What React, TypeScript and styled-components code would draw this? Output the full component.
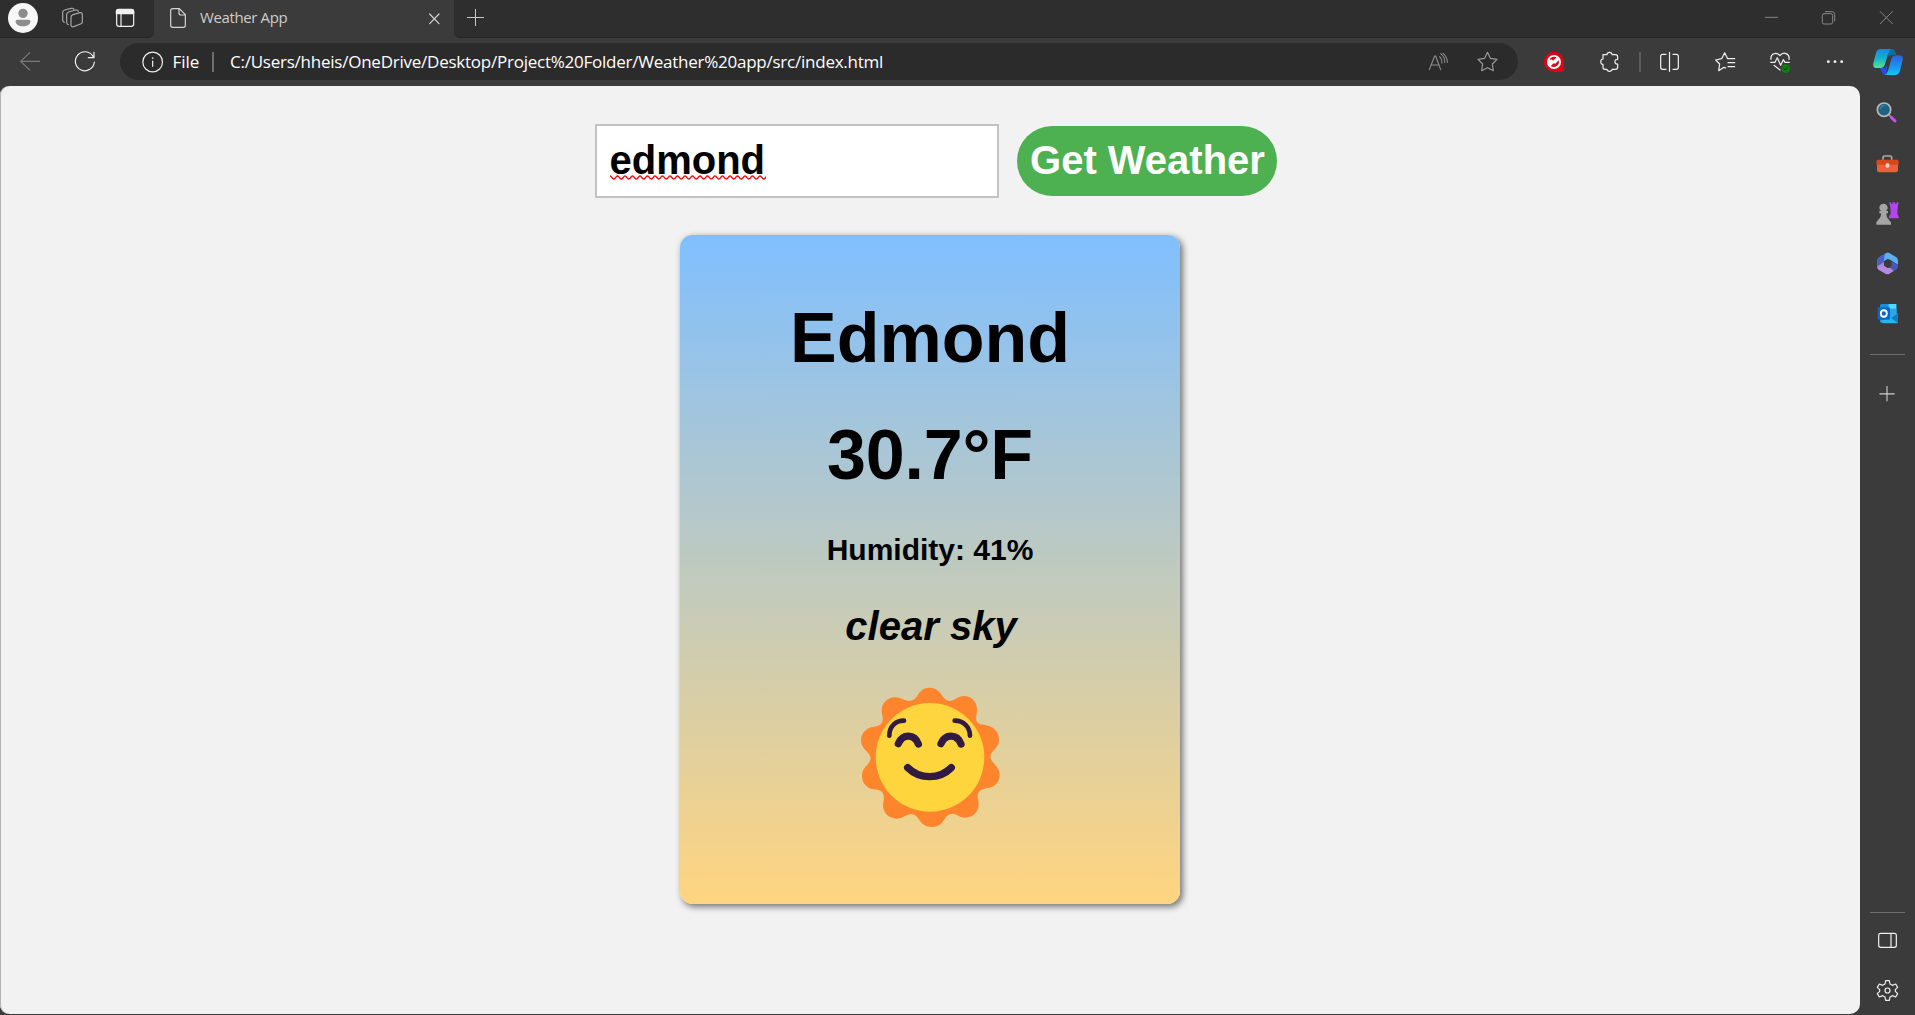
import React from "react";
import styled, { createGlobalStyle } from "styled-components";

const GlobalStyle = createGlobalStyle`
  * { box-sizing: border-box; }
  html, body { margin: 0; padding: 0; background: #3b3b3b; overflow: hidden; }
  h1, p { margin: 0; }
`;

const ui = `"Open Sans", "Noto Sans", sans-serif`;
const arial = `"Liberation Sans", Arial, sans-serif`;

const Window = styled.div`
  width: 1915px;
  height: 1015px;
  display: flex;
  flex-direction: column;
  background: #3b3b3b;
  font-family: ${ui};
`;

const TitleBar = styled.header`
  display: flex;
  height: 38px;
  flex: none;
`;

const TitleLeft = styled.div`
  width: 154px;
  display: flex;
  align-items: flex-start;
  background: #2e2e2e;
  border-bottom: 1px solid #262626;
  border-bottom-right-radius: 6px;
`;

const Tab = styled.div`
  width: 300px;
  display: flex;
  align-items: flex-start;
`;

const TabTitle = styled.span`
  margin: 7px 0 0 13px;
  width: 229px;
  font-size: 15px;
  line-height: 20px;
  letter-spacing: -0.38px;
  color: #cdcdcd;
  white-space: nowrap;
`;

const TitleRight = styled.div`
  flex: 1;
  display: flex;
  align-items: flex-start;
  padding-right: 21px;
  background: #2e2e2e;
  border-bottom: 1px solid #262626;
  border-bottom-left-radius: 6px;
`;

const Spacer = styled.div`
  flex: 1;
`;

const Toolbar = styled.div`
  display: flex;
  align-items: flex-start;
  height: 48px;
  flex: none;
`;

const AddressBar = styled.div`
  display: flex;
  align-items: center;
  width: 1398px;
  height: 37px;
  margin: 5px 0 0 24px;
  padding-right: 19px;
  border-radius: 19px;
  background: #2b2b2b;
`;

const AddressText = styled.span<{ $width: number; $ml: number; $track: number }>`
  width: ${(p) => p.$width}px;
  margin-left: ${(p) => p.$ml}px;
  font-size: 17px;
  line-height: 24px;
  letter-spacing: ${(p) => p.$track}px;
  color: #fff;
  white-space: nowrap;
`;

const VRule = styled.div<{ $ml: number; $mt?: number; $color: string }>`
  width: 2px;
  height: 20px;
  margin-left: ${(p) => p.$ml}px;
  margin-top: ${(p) => p.$mt ?? 0}px;
  background: ${(p) => p.$color};
`;

const Body = styled.div`
  display: flex;
  flex: 1;
  min-height: 0;
`;

const Page = styled.main`
  width: 1860px;
  height: 928px;
  display: flex;
  flex-direction: column;
  align-items: center;
  background: #f2f2f2;
  border-radius: 9px 10px 10px 9px;
  box-shadow: inset 1px 0 0 #b4b4b4;
  font-family: ${arial};
  font-weight: bold;
  color: #000;
`;

const Form = styled.form`
  display: flex;
  align-items: center;
  gap: 18px;
  margin: 38px 0 0 12px;
`;

const CityField = styled.div`
  width: 404px;
  height: 74px;
  padding: 11px 12.5px;
  background: #fff;
  border: 2px solid #c2c2c2;
  font-size: 40px;
  line-height: 46px;
`;

const Misspelled = styled.span`
  position: relative;
  display: inline-block;
`;

const Squiggle = styled.svg`
  position: absolute;
  left: 0;
  top: 38px;
`;

const Submit = styled.button`
  width: 260px;
  height: 70px;
  padding: 0 0 3px 1px;
  border: 0;
  border-radius: 35px;
  background: #4eb151;
  color: #fff;
  font: bold 40px/46px ${arial};
  white-space: nowrap;
`;

const Card = styled.section`
  width: 500px;
  height: 669px;
  margin-top: 37px;
  padding-top: 63px;
  display: flex;
  flex-direction: column;
  align-items: center;
  border-radius: 12.5px;
  background: linear-gradient(180deg, hsl(210, 100%, 75%), hsl(40, 100%, 75%));
  box-shadow: 2.5px 2.5px 6.25px hsla(0, 0%, 0%, 0.5);
`;

const City = styled.h1`
  font-size: 70px;
  line-height: 80px;
`;

const Temperature = styled.p`
  margin-top: 37px;
  font-size: 70px;
  line-height: 80px;
  letter-spacing: -0.2px;
`;

const Humidity = styled.p`
  margin-top: 38px;
  font-size: 30px;
  line-height: 34px;
`;

const Description = styled.p`
  margin-top: 36px;
  padding-left: 2px;
  font-size: 40px;
  line-height: 46px;
  font-style: italic;
`;

const SunIcon = styled.svg`
  margin-top: 21px;
  flex: none;
`;

const Sidebar = styled.aside`
  flex: 1;
  display: flex;
  flex-direction: column;
  align-items: center;
  padding-bottom: 13px;
`;

const HRule = styled.div<{ $mt: number }>`
  width: 35px;
  height: 1px;
  flex: none;
  margin-top: ${(p) => p.$mt}px;
  background: #6e6e6e;
`;

const IconSvg = styled.svg<{ $ml: number; $mt: number; $color: string }>`
  flex: none;
  margin-left: ${(p) => p.$ml}px;
  margin-top: ${(p) => p.$mt}px;
  color: ${(p) => p.$color};
  fill: none;
  stroke: currentColor;
  stroke-width: 3.6;
  stroke-linecap: round;
  stroke-linejoin: round;
`;

type IconProps = {
  box: [number, number, number, number];
  ml?: number;
  mt?: number;
  color?: string;
  children: React.ReactNode;
};

/* Icon artwork is drawn on a grid of three units per pixel. */
function Icon({ box, ml = 0, mt = 0, color = "#f0f0f0", children }: IconProps) {
  return (
    <IconSvg
      width={box[2] / 3}
      height={box[3] / 3}
      viewBox={box.join(" ")}
      $ml={ml}
      $mt={mt}
      $color={color}
    >
      {children}
    </IconSvg>
  );
}

function wave(width: number) {
  let d = "M0 1";
  for (let x = 0; x < width; x += 7.5) {
    d += ` C${x + 1.9} 1 ${x + 1.9} 4 ${x + 3.75} 4 S${x + 5.6} 1 ${x + 7.5} 1`;
  }
  return d;
}

function Sun() {
  return (
    <SunIcon width="180" height="170" viewBox="0 0 540 510" fill="none" strokeLinecap="round">
      <path
        fill="#ff852d"
        d="M208 93C225 91 229 81 237 70C245 58 256 53 268 53C281 53 293 58 301 69C310 81 314 92 332 93C346 90 354 78 372 78C395 78 411 96 411 118C411 132 406 143 410 154C417 167 432 163 447 168C466 174 477 190 477 209C477 236 453 240 451 260C454 281 479 288 479 315C479 336 464 352 443 354C429 356 414 360 413 378C413 388 416 394 416 403C416 426 399 443 376 443C358 443 352 432 338 431C320 433 317 443 308 455C300 466 288 471 275 471C261 471 249 466 241 454C233 443 228 433 212 432C197 434 188 446 170 446C147 446 129 429 129 406C129 396 133 388 131 377C128 360 114 360 100 358C80 354 66 339 66 318C66 290 90 286 92 264C90 245 63 239 63 211C63 191 78 174 98 171C113 169 127 167 128 148C129 139 125 132 125 122C125 99 143 82 166 82C184 82 192 93 208 93Z"
      />
      <circle cx="270" cy="262" r="163" fill="#ffd53e" />
      <g stroke="#321b41">
        <path strokeWidth="14" d="M148 197C148 170 165 152 192 152M344 152C371 152 389 170 390 197" />
        <path strokeWidth="22" d="M175 221C188 191 223 191 235 222M303 221C316 191 351 191 363 222" />
        <path strokeWidth="22" d="M203 293C239 329 299 329 334 293" />
      </g>
    </SunIcon>
  );
}

export default function App() {
  return (
    <Window>
      <GlobalStyle />
      <TitleBar>
        <TitleLeft>
          <Icon box={[24, 9, 90, 90]} ml={8} mt={3}>
            <circle cx="69" cy="54" r="45" fill="#f7f7f7" stroke="none" />
            <circle cx="69" cy="40" r="14" fill="#8c8c8c" stroke="none" />
            <path d="M52 59H86Q91 59 91 64C91 74 82 79 69 79S47 74 47 64Q47 59 52 59Z" fill="#8c8c8c" stroke="none" />
          </Icon>
          <Icon box={[183, 21, 69, 66]} ml={23} mt={7} color="#a6a6a6">
            <path d="M219 44L240 38Q247 37 247 44V65Q247 70 242 72L221 80Q213 82 213 75V52Q213 46 219 44Z" />
            <path d="M205 74Q200 73 200 67V43Q200 38 206 36L226 30Q233 29 235 34" />
            <path d="M193 67Q188 65 188 60V37Q188 32 194 30L213 25Q220 24 222 28" />
          </Icon>
          <Icon box={[345, 24, 60, 60]} ml={31} mt={8}>
            <rect x="350" y="29" width="51" height="50" rx="7" />
            <path d="M349 41V35Q349 28 356 28H394Q401 28 401 35V41Z" fill="currentColor" />
            <path d="M363 42V78" />
          </Icon>
        </TitleLeft>
        <Tab>
          <Icon box={[507, 21, 54, 66]} ml={15} mt={7} color="#d4d4d4">
            <path d="M518 26H538L556 44V76Q556 82 550 82H518Q512 82 512 76V32Q512 26 518 26ZM537 27V39Q537 45 543 45H555" />
          </Icon>
          <TabTitle>Weather App</TabTitle>
          <Icon box={[1284, 36, 39, 39]} ml={-1} mt={12} color="#d4d4d4">
            <path d="M1289 42L1317 71M1317 42L1289 71" />
          </Icon>
        </Tab>
        <TitleRight>
          <Icon box={[1398, 24, 57, 57]} ml={12} mt={8} color="#c8c8c8">
            <path d="M1402 52.5H1451M1426.5 28V77" strokeWidth="3" />
          </Icon>
          <Spacer />
          <Icon box={[1092, 45, 45, 15]} mt={15} color="#858585">
            <path d="M1096 52H1133" strokeWidth="3" />
          </Icon>
          <Icon box={[1263, 30, 45, 45]} ml={42} mt={10} color="#858585">
            <g strokeWidth="3">
              <rect x="1267" y="41" width="31" height="31" rx="5" />
              <path d="M1276 35H1296Q1304 35 1304 43V63" />
            </g>
          </Icon>
          <Icon box={[1437, 30, 45, 45]} ml={43} mt={10} color="#858585">
            <path d="M1441 35L1477 71M1477 35L1441 71" strokeWidth="3" />
          </Icon>
        </TitleRight>
      </TitleBar>

      <Toolbar>
        <Icon box={[57, 153, 66, 63]} ml={19} mt={13} color="#7a7a7a">
          <path d="M119 184H62M89 158L62 184L89 210" />
        </Icon>
        <Icon box={[222, 153, 66, 66]} ml={33} mt={13}>
          <path d="M283 186A28.500 28.500 0 1 1 279 169M282 157V173H265" />
        </Icon>
        <AddressBar>
          <Icon box={[423, 153, 69, 66]} ml={21}>
            <circle cx="458" cy="186" r="29.500" />
            <path d="M458 183V199" />
            <circle cx="458" cy="174" r="2.600" fill="currentColor" stroke="none" />
          </Icon>
          <AddressText $width={27} $ml={8.5} $track={-0.05}>File</AddressText>
          <VRule $ml={12.5} $color="#6e6e6e" />
          <AddressText $width={660} $ml={16} $track={-0.24}>
            C:/Users/hheis/OneDrive/Desktop/Project%20Folder/Weather%20app/src/index.html
          </AddressText>
          <Spacer />
          <Icon box={[84, 153, 63, 60]} color="#8f8f8f">
            <path d="M88 206L104 165H107L122 206M93 192H117M119 167Q126 174 126 186M122 158Q134 166 134 184M129 157Q142 168 142 184" strokeWidth="3.300" />
          </Icon>
          <Icon box={[228, 153, 69, 66]} ml={27} color="#9a9a9a">
            <path d="M262.500 157L271 175L291 178L277 192L280 212L262.500 203L245 212L248 192L234 178L254 175Z" />
          </Icon>
        </AddressBar>
        <Icon box={[429, 153, 66, 66]} ml={25} mt={13}>
          <path d="M462 155A30.500 30.500 0 1 0 462 216H492V186A30.500 30.500 0 0 0 462 155Z" fill="#d90416" stroke="none" />
          <circle cx="462" cy="186" r="21" fill="#fff" stroke="none" />
          <path d="M448 181A15.500 15.500 0 0 1 470 172L459 182L455 178Z" fill="#d90416" stroke="none" />
          <path d="M476 181A15.500 15.500 0 0 1 452 198L461 190L466 191Z" fill="#d90416" stroke="none" />
        </Icon>
        <Icon box={[597, 153, 63, 66]} ml={34} mt={13}>
          <path d="M609 164H621C620 155 637 155 636 164H646Q653 164 653 171V178C642 176 642 194 653 192V201Q653 208 646 208H636C637 216 620 216 621 208H615Q609 208 609 202V193C600 195 600 176 609 177Z" />
        </Icon>
        <VRule $ml={19} $mt={14} $color="#5c5c5c" />
        <Icon box={[777, 153, 63, 66]} ml={18} mt={13}>
          <path d="M808.500 157V214M798 163H788Q782 163 782 169V202Q782 208 788 208H798M819 163H829Q835 163 835 169V202Q835 208 829 208H819" />
        </Icon>
        <Icon box={[942, 153, 66, 66]} ml={34} mt={13}>
          <path d="M977 204L972 202L956 212L959 192L947 180L965 176L974 158L983 176H1004M984 188H1004M984 200H1004" />
        </Icon>
        <Icon box={[1107, 153, 66, 69]} ml={33} mt={13}>
          <path d="M1113 178C1110 162 1129 153 1140 167C1150 153 1170 161 1167 178M1112 187H1125L1132 173L1142 196L1150 179L1155 187H1168M1122 196L1140 210" />
          <circle cx="1157" cy="206" r="13.500" fill="#107c10" stroke="none" />
          <path d="M1151 206L1155 210L1163 201" stroke="#173f17" strokeWidth="3" />
        </Icon>
        <Icon box={[1278, 177, 54, 18]} ml={35} mt={21}>
          <g fill="currentColor" stroke="none">
            <circle cx="1285" cy="185" r="4.300" />
            <circle cx="1305" cy="185" r="4.300" />
            <circle cx="1325" cy="185" r="4.300" />
          </g>
        </Icon>
        <Icon box={[1416, 144, 96, 84]} ml={28} mt={10}>
          <defs>
            <linearGradient id="cpA" x1="0" y1="0" x2="0" y2="1">
              <stop offset="0" stopColor="#1588e0" />
              <stop offset=".5" stopColor="#12b4cf" />
              <stop offset="1" stopColor="#5be08c" />
            </linearGradient>
            <linearGradient id="cpB" x1="0" y1="0" x2="0" y2="1">
              <stop offset="0" stopColor="#2b62dd" />
              <stop offset=".6" stopColor="#1a95f0" />
              <stop offset="1" stopColor="#18c7f2" />
            </linearGradient>
          </defs>
          <g stroke="none">
            <path d="M1462 147H1475Q1483 147 1486 157L1489 165H1476Q1468 165 1465 172Z" fill="#0b6f9e" />
            <path d="M1439 203L1452 204Q1459 203 1463 194L1458 225Q1448 225 1446 217Z" fill="#244fe0" />
            <path d="M1441 147H1475Q1468 149 1465 159L1455 193Q1452 204 1441 204H1429Q1417 204 1420 190L1428 159Q1431 147 1441 147Z" fill="url(#cpA)" />
            <path d="M1488 166H1498Q1511 167 1508 180L1500 212Q1496 225 1485 225H1454Q1461 222 1464 212L1473 180Q1476 167 1488 166Z" fill="url(#cpB)" />
          </g>
        </Icon>
      </Toolbar>

      <Body>
        <Page>
          <Form onSubmit={(e) => e.preventDefault()}>
            <CityField>
              <Misspelled>
                edmond
                <Squiggle width="156" height="5" fill="none" stroke="#ff0a0a" strokeWidth="1.400">
                  <path d={wave(156)} />
                </Squiggle>
              </Misspelled>
            </CityField>
            <Submit type="submit">Get Weather</Submit>
          </Form>
          <Card>
            <City>Edmond</City>
            <Temperature>30.7°F</Temperature>
            <Humidity>Humidity: 41%</Humidity>
            <Description>clear sky</Description>
            <Sun />
          </Card>
        </Page>

        <Sidebar>
          <Icon box={[123, 63, 69, 69]} mt={15}>
            <path d="M162 105L169 111" stroke="#8a8a8a" strokeWidth="6" />
            <path d="M169 112L180 123" stroke="#c050f8" strokeWidth="9" />
            <circle cx="147" cy="89" r="20" fill="#22617f" stroke="#b9b9b9" strokeWidth="5" />
            <path d="M135 86Q138 76 148 76" stroke="#3f9dbb" strokeWidth="3" />
          </Icon>
          <Icon box={[123, 222, 69, 57]} mt={30}>
            <path d="M144 238V233Q144 228 149 228H165Q170 228 170 233V238" stroke="#a9aaa6" strokeWidth="5" />
            <path d="M126 250H189V270Q189 277 182 277H133Q126 277 126 270Z" fill="#ef6038" stroke="none" />
            <path d="M129 239H186Q191 239 191 245V254H124V245Q124 239 129 239Z" fill="#d84718" stroke="none" />
            <rect x="152" y="250" width="11" height="13" rx="4" fill="#d5d5d5" stroke="none" />
          </Icon>
          <Icon box={[123, 363, 69, 72]} mt={28}>
            <path d="M162 367H168V371H173V367H180V371H185V367H191L188 380L187 402L191 410V415H162V409L167 402L166 380Z" fill="#b446f0" stroke="none" />
            <path d="M139 393H133V400H138Q139 412 129 420L124 427V434H168V427L162 420Q153 411 154 400H159V393H153Q158 389 158 384A12.500 12.500 0 1 0 133 384Q133 390 139 393Z" fill="#a5a5a5" stroke="none" />
          </Icon>
          <Icon box={[123, 516, 69, 69]} mt={27}>
            <g stroke="none">
              <path d="M127 543Q127 536 133 532L155 518L153 532Q147 536 147 543V575L131 569Q127 566 127 560Z" fill="#8f88e6" />
              <path d="M127 543Q127 536 133 532L155 518L153 532Q147 536 147 546L127 558Z" fill="#4b5fc4" />
              <path d="M154 519Q158 516 163 519L184 532Q189 536 189 542V554L165 539Q159 536 153 540L147 544Q146 524 154 519Z" fill="#58b0ee" />
              <path d="M169 542L189 554V560Q188 566 183 569L160 582L148 575L163 565Q169 561 169 555Z" fill="#4758b4" />
              <path d="M127 556Q128 562 133 560L147 552V557L158 564L165 563L176 573L163 581Q157 585 151 581L131 569Q127 566 127 560Z" fill="#b58ade" />
              <path d="M148 544L158 537L169 543V555L159 563L148 556Z" fill="#3b3b3b" />
            </g>
          </Icon>
          <Icon box={[123, 669, 69, 66]} mt={28}>
            <g stroke="none">
              <path d="M140 672H184V728H140Q135 728 135 722V677Q135 672 140 672Z" fill="#1490df" />
              <path d="M161 672H184V700H161Z" fill="#50d9ff" />
              <path d="M161 686H184V708H161Z" fill="#28a8ea" />
              <path d="M188 699V730H145L135 724Z" fill="#28b4ee" />
              <path d="M168 714L188 700V729Z" fill="#117ac0" />
              <rect x="128" y="682" width="37" height="37" rx="4" fill="#0868c8" />
            </g>
            <ellipse cx="146.500" cy="700.500" rx="9" ry="9.800" stroke="#fff" strokeWidth="5.500" />
          </Icon>
          <HRule $mt={29} />
          <Icon box={[132, 918, 51, 48]} mt={31} color="#d0d0d0">
            <path d="M134.500 941.500H177.500M156 919.500V962.500" strokeWidth="3.300" />
          </Icon>
          <Spacer />
          <HRule $mt={0} />
          <Icon box={[129, 156, 57, 51]} mt={19}>
            <path d="M137 160H178Q184 160 184 166V196Q184 202 178 202H137Q131 202 131 196V166Q131 160 137 160ZM168 161V201" />
          </Icon>
          <Icon box={[123, 297, 69, 69]} mt={30}>
            <circle cx="157.500" cy="331.500" r="7.500" />
            <path d="M152 302H163L165 312L172 316L182 312L188 322L181 329V334L188 341L182 351L172 347L165 351L163 361H152L150 351L143 347L133 351L127 341L134 334V329L127 322L133 312L143 316L150 312Z" />
          </Icon>
        </Sidebar>
      </Body>
    </Window>
  );
}
